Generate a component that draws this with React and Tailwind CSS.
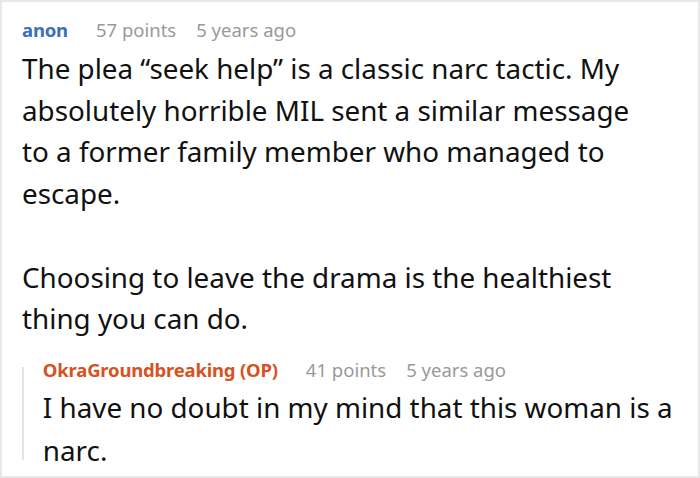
import React from 'react'

const font = { fontFamily: '"Noto Sans", "Open Sans", sans-serif' }

function Meta({ name, nameClass, points, age }) {
    return (
        <div className="flex items-center text-[18.5px] leading-[25px]">
            <span className={`font-bold tracking-[-0.2px] ${nameClass}`}>{name}</span>
            <span className="ml-[28px] text-[#999]">{points}</span>
            <span className="ml-[20px] text-[#999]">{age}</span>
        </div>
    )
}

export default function App() {
    return (
        <div style={font} className="w-[700px] h-[478px] bg-white border-2 border-[#e8e8e8] overflow-hidden">
            <div className="pl-[20px] pr-[10px] pt-[15px]">
                <Meta name="anon" nameClass="text-[#3a6ec4]" points="57 points" age="5 years ago" />
                <div className="mt-[6px] max-w-[620px] text-[27.8px] leading-[41.7px] text-[#111]">
                    <p>The plea “seek help” is a classic narc tactic. My absolutely horrible MIL sent a similar message to a former family member who managed to escape.</p>
                    <p className="mt-[41.7px]">Choosing to leave the drama is the healthiest thing you can do.</p>
                </div>
                <div className="mt-[17px] flex">
                    <div className="mt-[10px] mb-[12px] w-[2px] bg-[#e3e3e3]" />
                    <div className="pl-[19px]">
                        <Meta name="OkraGroundbreaking (OP)" nameClass="text-[#d5531f]" points="41 points" age="5 years ago" />
                        <p className="mt-[4px] text-[27.8px] leading-[43px] text-[#111]">
                            I have no doubt in my mind that this woman is a narc.
                        </p>
                    </div>
                </div>
            </div>
        </div>
    )
}
